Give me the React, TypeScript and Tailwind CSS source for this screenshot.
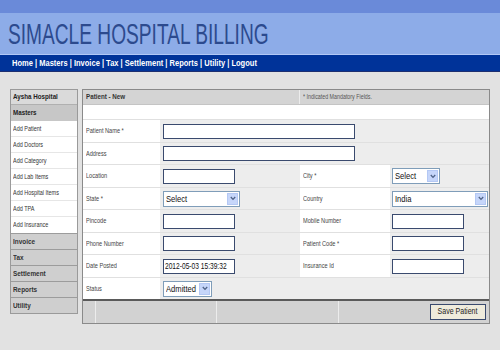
import React from "react";

const FONT = "font-[Liberation_Sans,Arial,sans-serif]";

function T({ children, className = "" }: { children: React.ReactNode; className?: string }) {
  return <span className={`inline-block origin-left scale-x-[0.8] whitespace-nowrap ${className}`}>{children}</span>;
}

function L({ children }: { children: React.ReactNode }) {
  return <span className="inline-block origin-left scale-x-[0.72] whitespace-nowrap">{children}</span>;
}

function TextBox({ w, value }: { w: number; value?: string }) {
  return (
    <div
      className="h-[15px] border border-[#3a4a6e] bg-white text-[8.5px] leading-[13px] pl-[1px] text-[#111] whitespace-nowrap overflow-hidden"
      style={{ width: w }}
    >
      {value ? <T className="scale-x-[0.78]">{value}</T> : null}
    </div>
  );
}

function SelectBox({ w, value }: { w: number; value: string }) {
  return (
    <div className="h-[16px] border border-[#7f9db9] bg-white flex items-stretch" style={{ width: w }}>
      <div className="flex-1 text-[9.5px] leading-[14px] pl-[2px] text-[#111] whitespace-nowrap overflow-hidden">
        <T>{value}</T>
      </div>
      <div className="w-[11px] m-[1px] bg-[#c6d6fa] border border-[#b4c8f4] flex items-center justify-center">
        <svg width="6" height="5" viewBox="0 0 6 5">
          <path d="M0.8 1 L3 3.4 L5.2 1" stroke="#4d6185" strokeWidth="1.3" fill="none" />
        </svg>
      </div>
    </div>
  );
}

type Cell = { kind: "text"; w: number; value?: string } | { kind: "select"; w: number; value: string } | null;

type Row = { label: string; wide?: boolean; left: Cell; rlabel?: string; right?: Cell; plainRight?: boolean };

const rows: Row[] = [
  { label: "Patient Name *", wide: true, left: { kind: "text", w: 192 } },
  { label: "Address", wide: true, left: { kind: "text", w: 192 } },
  { label: "Location", left: { kind: "text", w: 72 }, rlabel: "City *", right: { kind: "select", w: 48, value: "Select" } },
  { label: "State *", left: { kind: "select", w: 77, value: "Select" }, rlabel: "Country", right: { kind: "select", w: 96, value: "India" } },
  { label: "Pincode", left: { kind: "text", w: 72 }, rlabel: "Mobile Number", right: { kind: "text", w: 72 } },
  { label: "Phone Number", left: { kind: "text", w: 72 }, rlabel: "Patient Code *", right: { kind: "text", w: 72 } },
  { label: "Date Posted", left: { kind: "text", w: 72, value: "2012-05-03 15:39:32" }, rlabel: "Insurance Id", right: { kind: "text", w: 72 } },
  { label: "Status", left: { kind: "select", w: 49, value: "Admitted" }, plainRight: true },
];

function renderCell(c: Cell) {
  if (!c) return null;
  if (c.kind === "text") return <TextBox w={c.w} value={c.value} />;
  return <SelectBox w={c.w} value={c.value} />;
}

export default function App() {
  return (
    <div className={`w-[500px] h-[350px] bg-[#e2e2e2] overflow-hidden ${FONT}`}>
      {/* top strip */}
      <div className="h-[13px] bg-[#6a8ad9]" />
      {/* title band */}
      <div className="h-[41px] bg-[#8dace8] flex items-end pl-[8px] pb-[5px]">
        <div className="inline-block origin-left scale-x-[0.66] text-[29px] leading-[29px] text-[#2c4a8e] whitespace-nowrap">
          SIMACLE HOSPITAL BILLING
        </div>
      </div>
      <div className="h-[1px] bg-[#b2c8f6]" />
      {/* nav */}
      <div className="h-[16px] bg-[#003399] flex items-center pl-[12px] text-white font-bold text-[8.5px]">
        <T className="scale-x-[0.885]">Home | Masters | Invoice | Tax | Settlement | Reports | Utility | Logout</T>
      </div>
      <div className="h-[1px] bg-[#1d2f70]" />

      <div className="flex items-start pl-[10px] pt-[17px]">
        {/* sidebar */}
        <div className="w-[68px] border border-[#9a9a9a] bg-white">
          <div className="h-[15px] bg-[#dadada] border-b border-[#b0b0b0] pl-[2px] flex items-center font-bold text-[7.8px] text-[#222]">
            <T>Aysha Hospital</T>
          </div>
          <div className="h-[16px] bg-[#c7c7c7] pl-[2px] flex items-center font-bold text-[7.8px] text-[#222]">
            <T>Masters</T>
          </div>
          {["Add Patient", "Add Doctors", "Add Category", "Add Lab Items", "Add Hospital Items", "Add TPA", "Add Insurance"].map((t, i) => (
            <div
              key={t}
              className={`h-[16px] pl-[2px] flex items-center text-[7.6px] text-[#333] bg-white ${i < 6 ? "border-b border-[#e6e6e6]" : ""}`}
            >
              <L>{t}</L>
            </div>
          ))}
          {["Invoice", "Tax", "Settlement", "Reports", "Utility"].map((t) => (
            <div
              key={t}
              className="h-[16px] pl-[2px] flex items-center font-bold text-[8px] text-[#333] bg-[#cfcfcf] border-t border-[#9c9c9c]"
            >
              <T>{t}</T>
            </div>
          ))}
        </div>

        {/* main panel */}
        <div className="ml-[4px] w-[408px] border border-[#8a8a8a] bg-white">
          <div className="h-[15px] bg-[#d4d4d4] flex border-b border-[#c4c4c4]">
            <div className="w-[217px] pl-[3px] flex items-center font-bold text-[7.8px] text-[#333] border-r border-[#ececec]">
              <T>Patient - New</T>
            </div>
            <div className="flex-1 pl-[3px] flex items-center text-[7.4px] text-[#555]">
              <L>* Indicated Mandatory Fields.</L>
            </div>
          </div>
          <div className="h-[14px] bg-white" />
          {rows.map((r, i) => (
            <div key={r.label} className={`flex border-t border-[#e0e0e0] ${i % 2 === 0 ? "h-[23px]" : "h-[22px]"}`}>
              <div className="w-[77px] bg-white pl-[3px] flex items-center text-[7.8px] text-[#444]">
                <L>{r.label}</L>
              </div>
              {r.wide ? (
                <div className="flex-1 bg-[#ededed] pl-[3px] flex items-center">{renderCell(r.left)}</div>
              ) : (
                <>
                  <div className="w-[140px] bg-[#ededed] pl-[3px] flex items-center">{renderCell(r.left)}</div>
                  <div
                    className={`w-[90px] ${r.plainRight ? "bg-[#ededed]" : "bg-white"} pl-[3px] flex items-center text-[7.8px] text-[#444]`}
                  >
                    {r.rlabel ? <L>{r.rlabel}</L> : null}
                  </div>
                  <div className="flex-1 bg-[#ededed] pl-[2px] flex items-center">{renderCell(r.right ?? null)}</div>
                </>
              )}
            </div>
          ))}
          <div className="h-[2px] bg-[#5a5a5a]" />
          <div className="h-[22px] bg-[#d2d2d2] flex">
            <div className="w-[13px] border-r border-[#ececec]" />
            <div className="w-[121px] border-r border-[#ececec]" />
            <div className="w-[122px] border-r border-[#ececec]" />
            <div className="flex-1 flex items-center justify-end pr-[3px]">
              <div className="h-[16px] w-[56px] border border-[#3a4a6e] bg-[#efebdc] flex items-center justify-center text-[9px] text-[#222]">
                <span className="inline-block scale-x-[0.78] whitespace-nowrap">Save Patient</span>
              </div>
            </div>
          </div>
        </div>
      </div>
    </div>
  );
}
